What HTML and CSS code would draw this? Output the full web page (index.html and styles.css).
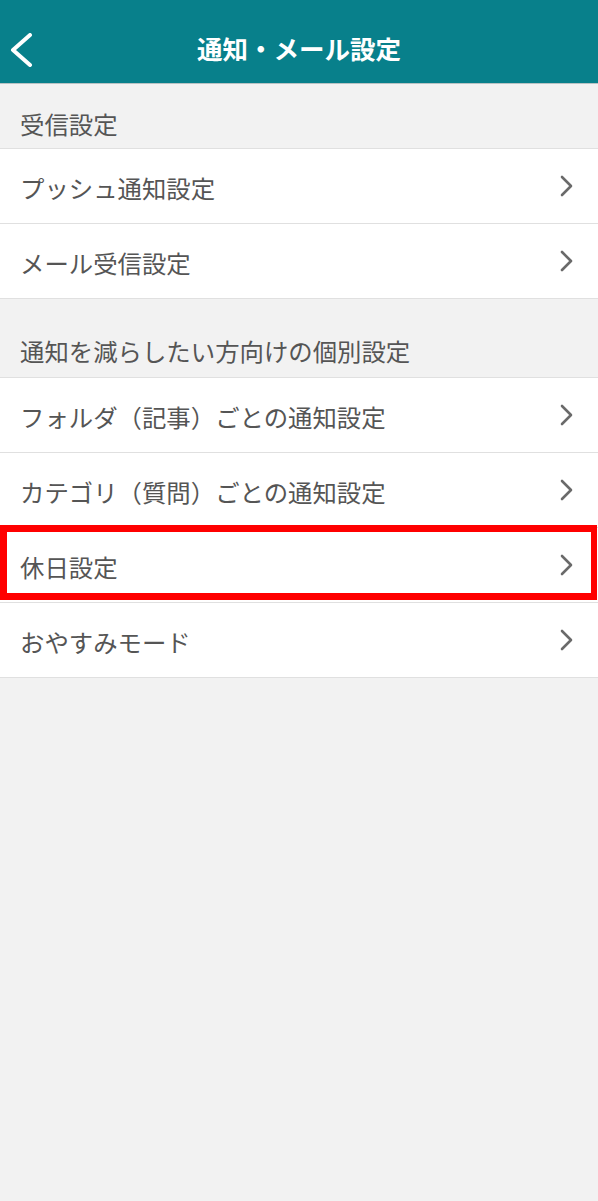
FILE: index.html
```html
<!DOCTYPE html>
<html lang="ja">
<head>
<meta charset="utf-8">
<title>通知・メール設定</title>
<link rel="stylesheet" href="styles.css">
</head>
<body>
<header class="app-bar">
  <button class="back" aria-label="戻る">
    <svg width="24" height="34" viewBox="0 0 24 34"><polyline points="20,2 3,17 20,32" fill="none" stroke="#fff" stroke-width="4" stroke-linecap="round" stroke-linejoin="round"/></svg>
  </button>
  <h1 class="title">通知・メール設定</h1>
</header>
<main>
  <div class="section-title first">受信設定</div>
  <ul class="list">
    <li class="row"><span class="label">プッシュ通知設定</span><svg class="chev" width="14" height="22" viewBox="0 0 14 22"><polyline points="2,2 11,11 2,20" fill="none" stroke="#6a6a6a" stroke-width="2.6" stroke-linecap="round" stroke-linejoin="round"/></svg></li>
    <li class="row"><span class="label">メール受信設定</span><svg class="chev" width="14" height="22" viewBox="0 0 14 22"><polyline points="2,2 11,11 2,20" fill="none" stroke="#6a6a6a" stroke-width="2.6" stroke-linecap="round" stroke-linejoin="round"/></svg></li>
  </ul>
  <div class="section-title second">通知を減らしたい方向けの個別設定</div>
  <ul class="list">
    <li class="row"><span class="label">フォルダ（記事）ごとの通知設定</span><svg class="chev" width="14" height="22" viewBox="0 0 14 22"><polyline points="2,2 11,11 2,20" fill="none" stroke="#6a6a6a" stroke-width="2.6" stroke-linecap="round" stroke-linejoin="round"/></svg></li>
    <li class="row"><span class="label">カテゴリ（質問）ごとの通知設定</span><svg class="chev" width="14" height="22" viewBox="0 0 14 22"><polyline points="2,2 11,11 2,20" fill="none" stroke="#6a6a6a" stroke-width="2.6" stroke-linecap="round" stroke-linejoin="round"/></svg></li>
    <li class="row highlighted"><span class="label">休日設定</span><svg class="chev" width="14" height="22" viewBox="0 0 14 22"><polyline points="2,2 11,11 2,20" fill="none" stroke="#6a6a6a" stroke-width="2.6" stroke-linecap="round" stroke-linejoin="round"/></svg></li>
    <li class="row"><span class="label">おやすみモード</span><svg class="chev" width="14" height="22" viewBox="0 0 14 22"><polyline points="2,2 11,11 2,20" fill="none" stroke="#6a6a6a" stroke-width="2.6" stroke-linecap="round" stroke-linejoin="round"/></svg></li>
  </ul>
</main>
</body>
</html>
```
FILE: styles.css
```css
*, *::before, *::after { box-sizing: border-box; }
html, body {
  margin: 0;
  padding: 0;
  background: #f2f2f2;
  font-family: "Noto Sans CJK JP", "Noto Sans", sans-serif;
  color: #555;
}
.app-bar {
  height: 84px;
  background: #08808b;
  border-bottom: 1px solid #b9c3c4;
  display: flex;
  align-items: center;
  justify-content: center;
  position: relative;
}
.back {
  position: absolute;
  left: 10px;
  top: 33px;
  width: 24px;
  height: 34px;
  padding: 0;
  border: 0;
  background: none;
  display: block;
}
.back svg { display: block; }
.title {
  margin: 12px 0 0 0;
  font-size: 25.5px;
  font-weight: 700;
  color: #fff;
  letter-spacing: 0;
  line-height: 1;
}
.section-title {
  display: flex;
  align-items: flex-end;
  padding: 0 0 0 20px;
  font-size: 24.4px;
  line-height: 34px;
  color: #555;
}
.section-title.first { height: 64px; padding-bottom: 7px; }
.section-title.second { height: 78px; padding-bottom: 9px; }
.list {
  list-style: none;
  margin: 0;
  padding: 0;
  border-top: 1px solid #e0e0e0;
}
.row {
  height: 75px;
  background: #fff;
  border-bottom: 1px solid #e0e0e0;
  display: flex;
  align-items: center;
  justify-content: space-between;
  padding: 3px 24px 0 20px;
  font-size: 24.4px;
  color: #555;
  position: relative;
}
.label { line-height: 34px; }
.chev { display: block; margin-top: -4px; }
.highlighted { z-index: 1; }
.highlighted::after {
  content: "";
  position: absolute;
  left: 0;
  right: 1px;
  top: -3px;
  height: 75px;
  border: 7px solid #ff0000;
  border-right-width: 6px;
  pointer-events: none;
}
```
